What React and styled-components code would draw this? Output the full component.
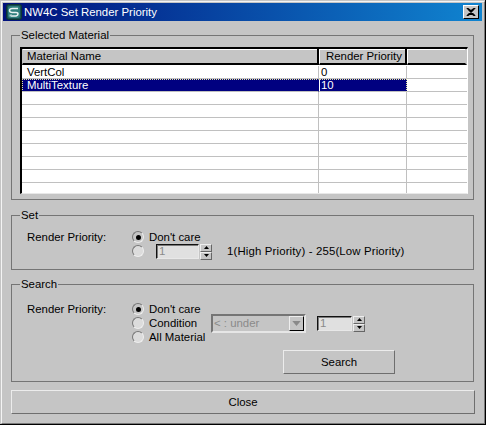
import React from "react";
import styled, { createGlobalStyle } from "styled-components";

const Global = createGlobalStyle`
  html, body { margin: 0; padding: 0; background: #c5c5c5; overflow: hidden; }
  * { box-sizing: border-box; }
`;

const Window = styled.div`
  width: 486px;
  height: 425px;
  padding: 1px 0 0 0;
  background: #c5c5c5;
  border-right: 1px solid #000;
  border-bottom: 1px solid #000;
  font: 11.4px "Liberation Sans", Arial, sans-serif;
  color: #000;
  display: flex;
  flex-direction: column;
`;
const Frame = styled.div`
  flex: 1;
  margin-left: 1px;
  padding: 1px 2px 0 1px;
  border-top: 1px solid #f4f4f4;
  border-left: 1px solid #f4f4f4;
  border-right: 1px solid #7a7a7a;
  border-bottom: 1px solid #7a7a7a;
  display: flex;
  flex-direction: column;
`;
const TitleBar = styled.div`
  height: 18px;
  flex: none;
  display: flex;
  align-items: center;
  padding: 0 3px 0 3px;
  background: linear-gradient(90deg, #00107c 0%, #1084d0 100%);
  color: #fff;
  font-size: 11.4px;
`;
const TitleText = styled.span`
  margin-left: 2px;
  flex: 1;
  white-space: nowrap;
`;
const CloseBox = styled.button`
  width: 16px;
  height: 14px;
  padding: 0;
  background: #c5c5c5;
  border: 1px solid;
  border-color: #fff #000 #000 #fff;
  display: flex;
  align-items: center;
  justify-content: center;
`;
const Body = styled.div`
  flex: 1;
  padding: 14px 8px 0 8px;
  display: flex;
  flex-direction: column;
`;
const Group = styled.section`
  position: relative;
  height: ${(p) => p.$h}px;
  margin-bottom: ${(p) => p.$gap}px;
  border: 1px solid #757575;
  flex: none;
`;
const Legend = styled.span`
  position: absolute;
  left: 8px;
  top: -8px;
  padding: 0 1px;
  background: #c5c5c5;
  line-height: 14px;
`;
const TableWrap = styled.div`
  margin: 11px 5px 0 8px;
  height: 147px;
  border-top: 2px solid #000;
  border-left: 2px solid #000;
  border-right: 1px solid #fff;
  border-bottom: 1px solid #e8e8e8;
  background: #fff;
  overflow: hidden;
`;
const Row = styled.div`
  display: grid;
  grid-template-columns: 297px 88px 1fr;
`;
const HeadCell = styled.div`
  height: 16px;
  padding-left: ${(p) => p.$pad}px;
  line-height: 14px;
  background: #c5c5c5;
  border-bottom: 2px solid #000;
  border-right: 2px solid ${(p) => (p.$last ? "transparent" : "#000")};
  border-left: 1px solid ${(p) => (p.$first ? "transparent" : "#fff")};
  box-shadow: inset 0 1px 0 #fff;
  white-space: nowrap;
`;
const HeadGap = styled.div`
  height: 1px;
  background: #fff;
`;
const Cell = styled.div`
  height: 13px;
  padding-left: ${(p) => p.$pad}px;
  line-height: 12px;
  border-bottom: 1px solid #c0c0c0;
  border-right: ${(p) => (p.$last ? "0" : "1px solid #c0c0c0")};
  background: ${(p) => (p.$sel ? "#000080" : "#fff")};
  color: ${(p) => (p.$sel ? "#fff" : "#000")};
  white-space: nowrap;
  ${(p) =>
    p.$sel &&
    "border-top: 1px dotted #e8e8a0; line-height: 11px; border-right-color: #000080;"}
  ${(p) => p.$sel && p.$start && "border-left: 1px dotted #e8e8a0; padding-left: 4px;"}
  ${(p) => p.$sel && p.$end && "border-right: 1px dotted #e8e8a0; box-shadow: inset 1px 0 0 #fff;"}
`;
const Form = styled.div`
  display: grid;
  grid-template-columns: 105px 1fr;
  padding: ${(p) => p.$top}px 0 0 15px;
`;
const FieldLabel = styled.div`
  line-height: 14px;
`;
const Options = styled.div`
  display: flex;
  flex-direction: column;
`;
const OptionRow = styled.div`
  height: 14px;
  display: flex;
  align-items: center;
`;
const Radio = styled.span`
  width: 12px;
  height: 12px;
  flex: none;
  border-radius: 50%;
  border: 1px solid;
  border-color: #777 #eee #eee #777;
  background: ${(p) => (p.$off ? "#dcdcdc" : "#c5c5c5")};
  display: flex;
  align-items: center;
  justify-content: center;
  &::after {
    content: "";
    width: 5px;
    height: 5px;
    border-radius: 50%;
    background: ${(p) => (p.$on ? "#000" : "transparent")};
  }
`;
const OptionText = styled.span`
  margin-left: 5px;
  width: ${(p) => p.$w || "auto"};
  white-space: nowrap;
`;
const Spin = styled.div`
  display: flex;
  flex: none;
  margin-left: ${(p) => p.$ml}px;
  height: 15px;
`;
const SpinField = styled.div`
  width: ${(p) => p.$w}px;
  height: 15px;
  background: #e0e0e0;
  border: 1px solid;
  border-color: #111 #e8e8e8 #e8e8e8 #111;
  box-shadow: inset 1px 1px 0 #7a7a7a;
  color: #8a8a8a;
  padding-left: 2px;
  line-height: 13px;
`;
const SpinButtons = styled.div`
  width: 12px;
  height: 16px;
  margin-left: 1px;
  display: flex;
  flex-direction: column;
`;
const SpinButton = styled.div`
  flex: 1;
  background: #c5c5c5;
  border: 1px solid;
  border-color: #eee #666 #666 #eee;
  display: flex;
  align-items: center;
  justify-content: center;
`;
const RangeHint = styled.span`
  margin-left: 15px;
  white-space: nowrap;
  letter-spacing: 0.15px;
`;
const Combo = styled.div`
  width: 95px;
  height: 19px;
  margin-left: 11px;
  flex: none;
  display: flex;
  align-items: center;
  justify-content: space-between;
  border: 2px solid;
  border-color: #757575 #e6e6e6 #e6e6e6 #757575;
  background: #c5c5c5;
  color: #8a8a8a;
  padding-left: 1px;
`;
const ComboButton = styled.div`
  width: 15px;
  height: 15px;
  border: 1px solid;
  border-color: #eee #000 #000 #eee;
  background: #c5c5c5;
  display: flex;
  align-items: center;
  justify-content: center;
`;
const ActionButton = styled.button`
  display: block;
  width: ${(p) => p.$w};
  height: ${(p) => p.$h}px;
  margin: ${(p) => p.$m || 0};
  padding: 0;
  background: #c5c5c5;
  border: 1px solid;
  border-color: #ececec #6e6e6e #6e6e6e #ececec;
  font: inherit;
  color: #000;
`;
const SearchColumn = styled.div`
  display: flex;
  flex-direction: column;
`;

const MaxIcon = () => (
  <svg width="16" height="16" viewBox="0 0 16 16">
    <rect x="0.5" y="0.5" width="15" height="15" rx="2" fill="#174f52" stroke="#0c3434" />
    <rect x="2" y="2" width="12" height="12" rx="2" fill="#2f7f7c" />
    <path d="M12 4.5H6.5Q3.5 4.5 3.5 6.5T6.5 8.5H10Q12 8.5 12 10T10 12H5" fill="none" stroke="#e8f2f2" strokeWidth="1.5" />
    <path d="M3.5 10.5h2.5v2h-2.5z" fill="#b8d4d4" />
  </svg>
);
const CloseGlyph = () => (
  <svg width="10" height="8" viewBox="0 0 10 8">
    <path d="M1 0l3.9 3L9 0M1 8l3.9-3L9 8M1 0l8 8M9 0L1 8" fill="none" stroke="#000" strokeWidth="1.6" />
  </svg>
);
const Tri = ({ up, color = "#000", w = 5, h = 3 }) => (
  <svg width={w} height={h} viewBox="0 0 5 3">
    <path d={up ? "M2.5 0L5 3H0z" : "M0 0h5L2.5 3z"} fill={color} />
  </svg>
);

const Spinner = ({ ml, w }) => (
  <Spin $ml={ml}>
    <SpinField $w={w}>1</SpinField>
    <SpinButtons>
      <SpinButton><Tri up /></SpinButton>
      <SpinButton><Tri /></SpinButton>
    </SpinButtons>
  </Spin>
);

const rows = [
  ["VertCol", "0"],
  ["MultiTexture", "10", true],
  ...Array.from({ length: 8 }, () => ["", ""]),
];

export default function App() {
  return (
    <Window>
      <Global />
      <Frame>
        <TitleBar>
          <MaxIcon />
          <TitleText>NW4C Set Render Priority</TitleText>
          <CloseBox aria-label="Close"><CloseGlyph /></CloseBox>
        </TitleBar>
        <Body>
          <Group $h={165} $gap={15}>
            <Legend>Selected Material</Legend>
            <TableWrap>
              <Row>
                <HeadCell $pad={4} $first>Material Name</HeadCell>
                <HeadCell $pad={6}>Render Priority</HeadCell>
                <HeadCell $last />
              </Row>
              <HeadGap />
              {rows.map(([name, pr, sel], i) => (
                <Row key={i}>
                  <Cell $pad={5} $sel={sel} $start>{name}</Cell>
                  <Cell $pad={2} $sel={sel} $end>{pr}</Cell>
                  <Cell $last />
                </Row>
              ))}
            </TableWrap>
          </Group>
          <Group $h={55} $gap={14}>
            <Legend>Set</Legend>
            <Form $top={14}>
              <FieldLabel>Render Priority:</FieldLabel>
              <Options>
                <OptionRow>
                  <Radio $on />
                  <OptionText>Don't care</OptionText>
                </OptionRow>
                <OptionRow>
                  <Radio $off />
                  <Spinner ml={12} w={43} />
                  <RangeHint>1(High Priority) - 255(Low Priority)</RangeHint>
                </OptionRow>
              </Options>
            </Form>
          </Group>
          <Group $h={98} $gap={8}>
            <Legend>Search</Legend>
            <Form $top={17}>
              <FieldLabel>Render Priority:</FieldLabel>
              <SearchColumn>
                <Options>
                  <OptionRow>
                    <Radio $on />
                    <OptionText>Don't care</OptionText>
                  </OptionRow>
                  <OptionRow>
                    <Radio $off />
                    <OptionText $w="51px">Condition</OptionText>
                    <Combo>
                      &lt; : under
                      <ComboButton><Tri color="#8a8a8a" w={9} h={5} /></ComboButton>
                    </Combo>
                    <Spinner ml={11} w={35} />
                  </OptionRow>
                  <OptionRow>
                    <Radio $off />
                    <OptionText>All Material</OptionText>
                  </OptionRow>
                </Options>
                <ActionButton $w="112px" $h={24} $m="6px 0 0 151px">Search</ActionButton>
              </SearchColumn>
            </Form>
          </Group>
          <ActionButton $w="464px" $h={24}>Close</ActionButton>
        </Body>
      </Frame>
    </Window>
  );
}
